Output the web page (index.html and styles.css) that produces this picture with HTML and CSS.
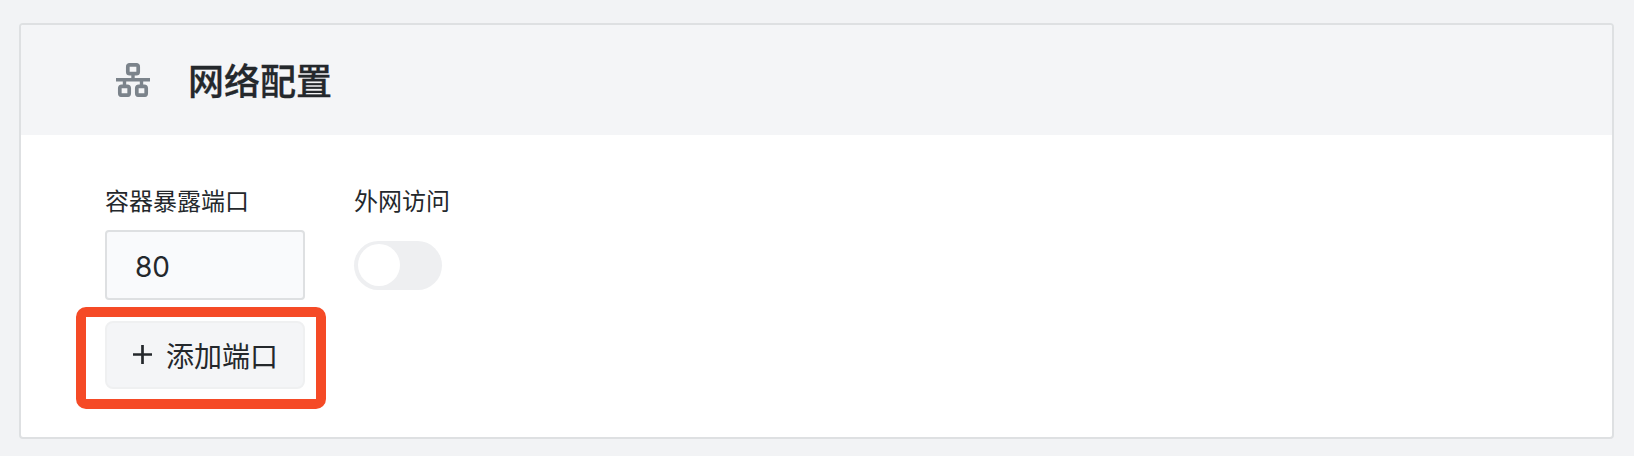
FILE: index.html
```html
<!DOCTYPE html>
<html lang="zh-CN">
<head>
<meta charset="utf-8">
<title>网络配置</title>
<link rel="stylesheet" href="styles.css">
</head>
<body>
<section class="card">
  <header class="card-header">
    <svg class="network-icon" viewBox="0 0 34 34" fill="none" stroke="currentColor">
      <rect x="11.8" y="1.8" width="10.4" height="8.9" rx="2" stroke-width="3.7"/>
      <rect x="3.8" y="23.3" width="9.4" height="8.9" rx="2" stroke-width="3.7"/>
      <rect x="20.8" y="23.3" width="9.4" height="8.9" rx="2" stroke-width="3.7"/>
      <path d="M17 12v5M0 16.8h34M8.5 17v5M25.5 17v5" stroke-width="3.4"/>
    </svg>
    <h2 class="card-title">网络配置</h2>
  </header>
  <div class="card-body">
    <div class="port-column">
      <label class="label" for="port">容器暴露端口</label>
      <input class="port-input" id="port" type="text" value="80">
      <button class="add-button" type="button">
        <svg class="plus-icon" viewBox="0 0 20 20" fill="none" stroke="currentColor" stroke-width="2.7"><path d="M9.5 0v19M0 9.5h19"/></svg>
        <span class="add-text">添加端口</span>
        <span class="highlight"></span>
      </button>
    </div>
    <div class="access-column">
      <span class="label">外网访问</span>
      <span class="switch" role="switch" aria-checked="false"><span class="knob"></span></span>
    </div>
  </div>
</section>
</body>
</html>
```
FILE: styles.css
```css
* { box-sizing: border-box; }
body {
  margin: 0;
  height: 456px;
  padding: 23px 20px 17px 19px;
  background: #f2f3f5;
  color: #24282c;
  font-family: Inter, "Noto Sans CJK SC", sans-serif;
}
.card {
  height: 416px;
  border: 2px solid #dee0e2;
  border-radius: 4px;
  background: #fff;
  overflow: hidden;
}
.card-header {
  display: flex;
  align-items: center;
  height: 110px;
  padding-left: 95px;
  background: #f4f5f7;
}
.network-icon { width: 34px; height: 34px; color: #7b838b; }
.card-title {
  margin: 4px 0 0 38px;
  font-size: 36px;
  line-height: 48px;
  font-weight: 500;
  -webkit-text-stroke: 0.3px currentColor;
}
.card-body {
  display: flex;
  gap: 49px;
  padding: 50px 84px 0;
}
.port-column, .access-column {
  display: flex;
  flex-direction: column;
  align-items: flex-start;
}
.port-column { width: 200px; }
.label { height: 45px; font-size: 24px; line-height: 34px; }
.port-input {
  width: 200px;
  height: 70px;
  padding: 3px 28px 0;
  border: 2px solid #dee0e2;
  border-radius: 4px;
  background: #f9fafc;
  color: inherit;
  font: 28px Inter, sans-serif;
}
.add-button {
  position: relative;
  display: flex;
  align-items: center;
  width: 200px;
  height: 68px;
  margin-top: 21px;
  padding: 0 0 0 26px;
  border: 2px solid #eff0f1;
  border-radius: 8px;
  background: #f4f5f7;
  color: inherit;
  font: 28px/40px Inter, "Noto Sans CJK SC", sans-serif;
  gap: 13px;
}
.plus-icon { width: 20px; height: 20px; }
.add-text { padding-top: 4px; }
.highlight {
  position: absolute;
  left: -31px;
  top: -16px;
  width: 250px;
  height: 102px;
  border: 10px solid #f54a26;
  border-radius: 10px;
}
.switch {
  width: 88px;
  height: 49px;
  margin-top: 11px;
  padding: 3px 4px;
  border-radius: 25px;
  background: #eeeff1;
}
.knob {
  display: block;
  width: 42px;
  height: 42px;
  border-radius: 50%;
  background: #fff;
}
```
